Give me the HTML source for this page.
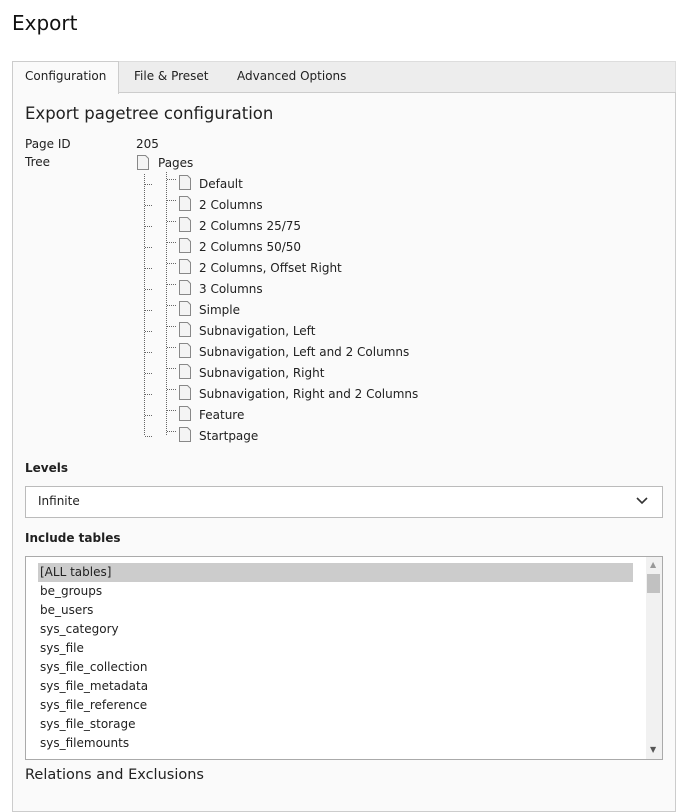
<!DOCTYPE html>
<html><head><meta charset="utf-8"><style>
body{margin:0;background:#fff;font-family:"DejaVu Sans","Liberation Sans",sans-serif;color:#212121;font-size:12px;width:688px;height:788px;overflow:hidden;position:relative}
.a{position:absolute;white-space:nowrap}
</style></head><body>
<div class="a" style="left:12px;top:11px;font-size:20px;color:#111">Export</div>
<div class="a" style="left:12px;top:61px;width:664px;height:32px;background:#ededed;border:1px solid #ddd;box-sizing:border-box"></div>
<div class="a" style="left:12px;top:92px;width:664px;height:720px;background:#fafafa;border:1px solid #ccc;box-sizing:border-box"></div>
<div class="a" style="left:12px;top:61px;width:107px;height:33px;background:#fafafa;border:1px solid #ccc;border-bottom:none;box-sizing:border-box"></div>
<div class="a" style="left:25px;top:69px;">Configuration</div>
<div class="a" style="left:134px;top:69px;">File &amp; Preset</div>
<div class="a" style="left:237px;top:69px;">Advanced Options</div>
<div class="a" style="left:25px;top:104px;font-size:16.5px">Export pagetree configuration</div>
<div class="a" style="left:25px;top:137px">Page ID</div>
<div class="a" style="left:136px;top:137px">205</div>
<div class="a" style="left:25px;top:155px">Tree</div>
<svg class="a" style="left:0;top:0" width="688" height="460">
<path d="M137.5 155.5h8l3 3v11h-11z" fill="#f4f4f4" stroke="#888"/>
<line x1="144.5" y1="174" x2="144.5" y2="436" stroke="#666" stroke-dasharray="1,1"/>
<line x1="166.5" y1="172" x2="166.5" y2="426" stroke="#666" stroke-dasharray="1,1"/>
<g id="rows"></g>
</svg>
<div id="tree"></div>
<div class="a" style="left:25px;top:461px;font-weight:bold">Levels</div>
<div class="a" style="left:25px;top:486px;width:638px;height:32px;background:#fff;border:1px solid #bbb;box-sizing:border-box"></div>
<div class="a" style="left:38px;top:494px">Infinite</div>
<svg class="a" style="left:635px;top:496px" width="14" height="10"><path d="M2 2l5 5 5-5" fill="none" stroke="#333" stroke-width="1.6"/></svg>
<div class="a" style="left:25px;top:531px;font-weight:bold">Include tables</div>
<div class="a" style="left:25px;top:556px;width:638px;height:204px;background:#fff;border:1px solid #aaa;box-sizing:border-box"></div>
<div class="a" style="left:38px;top:563px;width:595px;height:19px;background:#ccc"></div>
<div class="a" style="left:646px;top:557px;width:16px;height:202px;background:#f1f1f1"></div>
<div class="a" style="left:647px;top:574px;width:13px;height:19px;background:#c1c1c1"></div>
<div class="a" style="left:650px;top:560px;font-size:8px;color:#999">▲</div>
<div class="a" style="left:650px;top:745px;font-size:8px;color:#555">▼</div>
<div id="tables"></div>
<div class="a" style="left:25px;top:767px;font-size:14.5px">Relations and Exclusions</div>
<script>
var items=["Default","2 Columns","2 Columns 25/75","2 Columns 50/50","2 Columns, Offset Right","3 Columns","Simple","Subnavigation, Left","Subnavigation, Left and 2 Columns","Subnavigation, Right","Subnavigation, Right and 2 Columns","Feature","Startpage"];
var h="",s="";
items.forEach(function(t,i){var y=184+21*i;
s+='<line x1="145" y1="'+(y+0.5)+'" x2="152" y2="'+(y+0.5)+'" stroke="#666" stroke-dasharray="1,1"/>';
s+='<line x1="167" y1="'+(y-4.5)+'" x2="176" y2="'+(y-4.5)+'" stroke="#666" stroke-dasharray="1,1"/>';
s+='<path d="M179.5 '+(y-8.5)+'h8l3 3v11h-11z" fill="#f4f4f4" stroke="#888"/>';
if(i==items.length-1)s+='<line x1="166.5" y1="426" x2="166.5" y2="436" stroke="#666" stroke-dasharray="1,1"/>';
h+='<div class="a" style="left:199px;top:'+(y-7)+'px">'+t+'</div>';});
document.getElementById("rows").innerHTML=s;
h+='<div class="a" style="left:158px;top:156px">Pages</div>';
document.getElementById("tree").innerHTML=h;
var tb=["[ALL tables]","be_groups","be_users","sys_category","sys_file","sys_file_collection","sys_file_metadata","sys_file_reference","sys_file_storage","sys_filemounts"],k="";
tb.forEach(function(t,i){k+='<div class="a" style="left:40px;top:'+(565+19*i)+'px">'+t+'</div>';});
document.getElementById("tables").innerHTML=k;
</script>
</body></html>
